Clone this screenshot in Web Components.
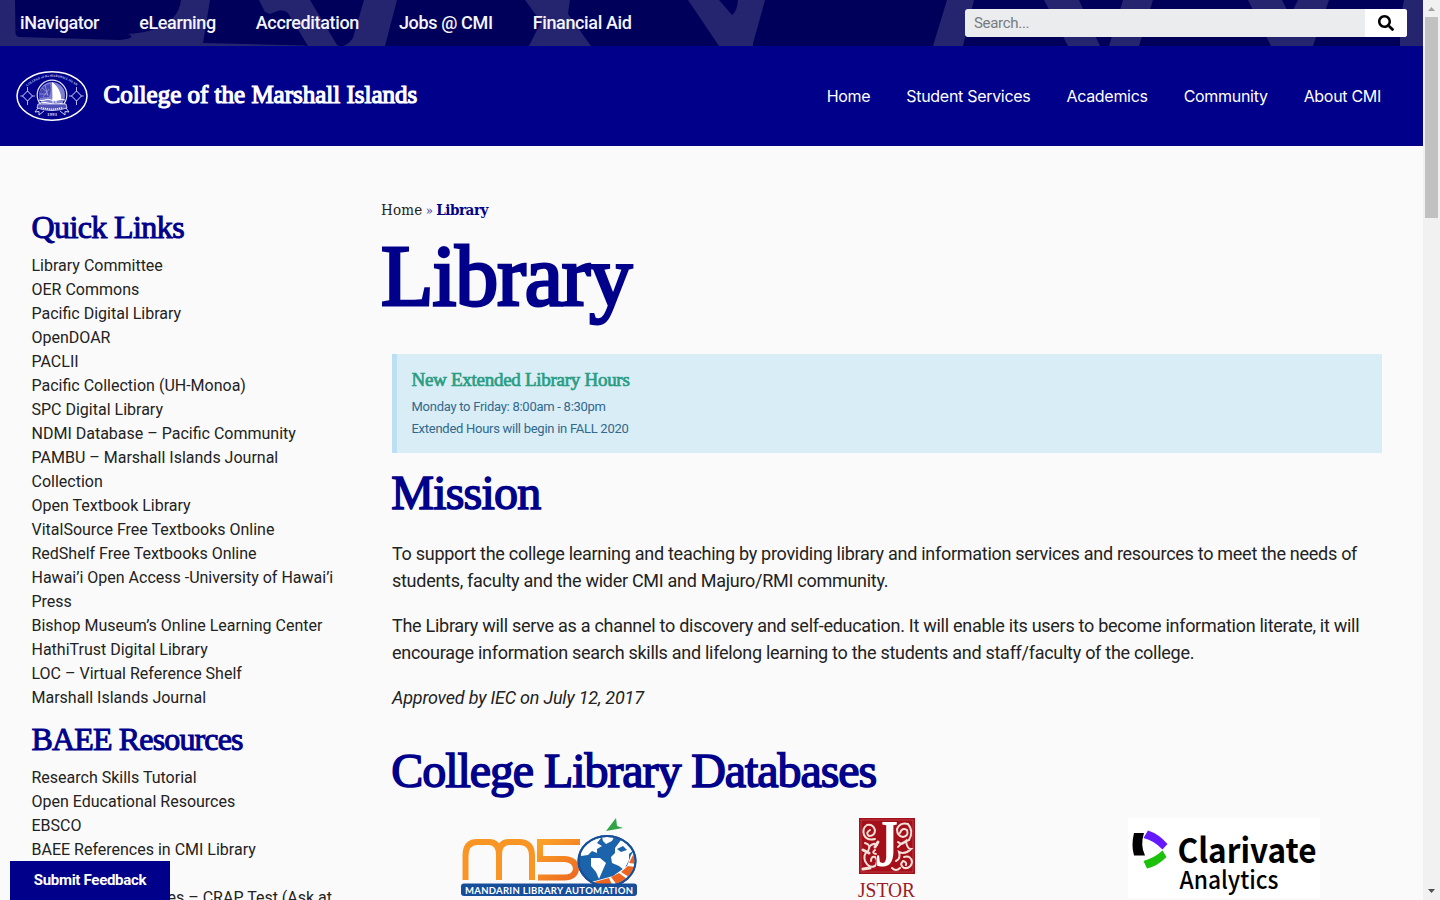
<!DOCTYPE html>
<html lang="en">
<head>
<meta charset="utf-8">
<title>Library – College of the Marshall Islands</title>
<style>
html,body{margin:0;height:100%;overflow:hidden;background:#fafafa}
body{font-family:Roboto,"Liberation Sans",sans-serif;color:#222}
</style>
</head>
<body>
<cmi-page></cmi-page>
<script>
const define = (name, html) => {
  const t = document.createElement('template');
  t.innerHTML = html;
  customElements.define(name, class extends HTMLElement {
    constructor() {
      super();
      this.attachShadow({mode: 'open'}).append(t.content.cloneNode(true));
    }
  });
};

define('cmi-topbar', `
<style>
:host{display:grid;height:46px;background:#00005b;overflow:hidden}
.art{display:block;width:1423px;height:46px}
.art,.row{grid-area:1/1}
.row{display:flex;align-items:center;justify-content:space-between;padding:0 16px 0 20px}
nav{display:flex;gap:40px;font-size:18px;font-weight:500;letter-spacing:-.36px;color:#f4f4fc;line-height:46px;white-space:nowrap}
.search{display:flex;width:442px;height:28px;border-radius:3px;overflow:hidden;background:#ebecee}
.search span{flex:1;padding-left:9px;font-size:15px;line-height:28px;letter-spacing:-.3px;color:#777b80}
.search b{width:42px;background:#fff;display:flex;align-items:center;justify-content:center}
</style>
<svg class="art" viewBox="0 0 1423 46"><g fill="#24246f">
<path d="M0 0H15L15.500 33Q16 37 20 37L120 40Q138 38 128 34Q160 32 173 18Q180 10 181 0H210L203 43L305 45.500V46H0Z"/>
<path d="M259 0L265 12L270 14L275 12Q283 8 288 13L308 46H385L397 0H364L353 38Q345 49 337 45L310 0Z"/>
<path d="M525 0L541 22L529 46H591L568 14L570 0Z"/>
<path d="M688 0L719 46H753Q753 42 754 40L765 0H738Q737 12 732 15L719 0Z"/>
<path d="M947 0H974L963 46H933Z"/><path d="M1044 0H1079L1100 46H1068Z"/><path d="M1123 0H1153L1139 46H1109Z"/>
<path d="M1248 0L1271 46H1313L1329 0H1298L1293 10H1287L1282 0Z"/><path d="M1404 0H1423V46H1400V20Z"/></g></svg>
<div class="row"><nav><slot></slot></nav>
<div class="search"><span>Search...</span><b><svg width="16" height="16" viewBox="0 0 512 512"><path d="M505 442.700L405.300 343c-4.500-4.500-10.600-7-17-7H372c27.600-35.300 44-79.700 44-128C416 93.100 322.900 0 208 0S0 93.100 0 208s93.100 208 208 208c48.300 0 92.700-16.400 128-44v16.300c0 6.400 2.500 12.500 7 17l99.700 99.700c9.400 9.400 24.600 9.400 33.900 0l28.300-28.300c9.400-9.400 9.400-24.600.1-34zM208 336c-70.700 0-128-57.200-128-128 0-70.700 57.200-128 128-128 70.700 0 128 57.200 128 128 0 70.700-57.200 128-128 128z"/></svg></b></div></div>`);

define('cmi-seal', `
<style>:host{display:block;width:72px;height:52px}svg{display:block;overflow:visible}text{font-family:"Liberation Serif",serif;fill:#d8d8f8}</style>
<svg width="72" height="52" viewBox="0 0 72 52" fill="none" stroke="#e4e4fa">
<ellipse cx="36" cy="26" rx="35" ry="24.300" stroke="#fff" stroke-width="1.500"/>
<path id="arc" d="M11 16.500Q36-3 61.500 16.500" stroke="none"/>
<text font-size="3.200" font-weight="bold" stroke="none"><textPath href="#arc">COLLEGE of the MARSHALL ISLANDS</textPath></text>
<circle cx="36" cy="25" r="14.800" stroke-width="1.200"/>
<circle cx="36" cy="25" r="13" fill="#8080d0" stroke="none"/>
<path d="M36 12C42 16 46 24 45 30C42 31 39 30 36.500 30Z" fill="#fff" stroke="none"/>
<path d="M34 14C26 15 23 21 23 28L33 27C35 22 35 18 34 14Z" fill="#4646b3" stroke="none"/>
<path d="M26 18l5 4M29 15l3 11M24 24l8 0M27 27l6-8" stroke="#b5b5e8" stroke-width=".6"/>
<path d="M23 30q3 1.500 6 0t6 0t6 0t8 0M24 33q5-1.500 10 .5t13-.5" stroke="#fff" stroke-width="1"/>
<path d="M37 28v6M40 28v5" stroke="#fff" stroke-width=".9"/>
<path d="M22 34L50 34L51 38Q36 43 21 38Z" fill="#5050b8" stroke-width=".8"/>
<path d="M25 37.500q11 3.200 22 0" stroke="#fff" stroke-width="1.300" stroke-dasharray="1.200 .8"/>
<path d="M22 38l-3 4 4-.5v3.500l5-4M50 38l3 4-4-.5v3.500l-5-4" stroke-width=".9"/>
<text x="31" y="46" font-size="5" font-weight="bold" stroke="none" textLength="10">1993</text>
<g stroke-width="1"><path d="M11.500 21L16.500 26L11.500 31L6.500 26Z"/><path d="M60.500 21L65.500 26L60.500 31L55.500 26Z"/></g>
<path d="M11.500 17v4M11.500 31v4M4.500 26h2M16.500 26h2.500M60.500 17v4M60.500 31v4M53 26h2.500M65.500 26h2" stroke-width=".8"/>
</svg>`);

define('cmi-header', `
<style>
:host{display:flex;align-items:center;justify-content:space-between;box-sizing:border-box;height:100px;background:#00008b;padding:0 42px 0 16px;color:#fff}
.brand{display:flex;align-items:center;gap:15.500px}
strong{font:400 25px/30px "Liberation Serif",serif;-webkit-text-stroke:1.200px #fff;white-space:nowrap;padding-bottom:3px}
nav{display:flex;gap:36px;font:400 16px/24px Inter,sans-serif;letter-spacing:-.3px;white-space:nowrap;padding-bottom:1px}
</style>
<div class="brand"><cmi-seal></cmi-seal><strong>College of the Marshall Islands</strong></div>
<nav><slot></slot></nav>`);

const listTemplate = document.createElement('template');
listTemplate.innerHTML = `
<style>
:host{display:block}
h2{margin:0 0 11px;font:400 32px/32px "Liberation Serif",serif;color:#00008b;-webkit-text-stroke:1px #00008b;letter-spacing:var(--track,-.6px);white-space:nowrap}
ul{list-style:none;margin:0;padding:0;font-size:16px;line-height:24px}
li{min-height:24px}
</style>
<h2></h2><ul></ul>`;
customElements.define('quick-links', class extends HTMLElement {
  connectedCallback() {
    if (this.shadowRoot) return;
    const root = this.attachShadow({mode: 'open'});
    root.append(listTemplate.content.cloneNode(true));
    root.querySelector('h2').textContent = this.getAttribute('heading');
    const ul = root.querySelector('ul');
    for (const a of [...this.querySelectorAll('a')]) {
      const li = document.createElement('li');
      li.textContent = a.textContent;
      if (a.dataset.indent) li.style.paddingLeft = a.dataset.indent;
      ul.append(li);
    }
  }
});

define('notice-box', `
<style>
:host{display:block;box-sizing:border-box;height:99px;background:#d9edf7;border-left:5px solid #bcdff1;padding:14px 14.500px;color:#31688c;font-size:13px;line-height:22px;letter-spacing:-.27px}
h3{margin:0 0 4px;font:400 19px/24px "Liberation Serif",serif;color:#2a9d83;-webkit-text-stroke:.7px #2a9d83;letter-spacing:-.28px}
</style><h3><slot name="title"></slot></h3><slot></slot>`);

define('logo-m5', `
<style>:host{display:block;width:178px;height:80px}svg{display:block}</style>
<svg width="178" height="80" viewBox="0 0 178 80">
<defs><linearGradient id="o" x1="0" y1="0" x2="1" y2="1"><stop offset="0" stop-color="#fba428"/><stop offset="1" stop-color="#ed6820"/></linearGradient>
<clipPath id="c"><ellipse cx="146" cy="43" rx="27.500" ry="24"/></clipPath></defs>
<path d="M4.500 62V38Q4.500 24 16 24H28Q38 24 38 37V62M38 37Q38 24 48 24H58Q71 24 71 38V62" fill="none" stroke="#f89524" stroke-width="6"/>
<path d="M119 24H79V41H104Q115 42 115 51Q114 59.500 103 59.500H77" fill="none" stroke="url(#o)" stroke-width="6"/>
<ellipse cx="146" cy="43" rx="29.500" ry="26" fill="#15509b"/>
<g clip-path="url(#c)"><rect x="115" y="12" width="62" height="62" fill="#1b63aa"/>
<path d="M119 33L124 25L132 20L140 20L136 25L141 28L136 31L136 35L131 33L127 37L120 38Z" fill="#fff"/>
<path d="M141 19L153 19L151 23L145 26L142 23Z" fill="#fff"/>
<path d="M130 40L139 40L145 45L141 54L138 61L135 54L130 48Z" fill="#fff"/>
<path d="M154 30L160 22L170 23L173 32L168 36L168 42L163 52L158 48L151 45L150 39L154 35Z" fill="#fff"/>
<path d="M156 31L162 28L166 32L160 34Z" fill="#1b63aa"/>
<path d="M176 28L170 37L166 48L152 58L134 63L120 65L145 76H181Z" fill="#fff"/>
<path d="M175 33V46L168 45L172 37ZM167 48L174 49L168 59L160 54ZM158 55L166 61L156 67L150 59ZM148 60L152 69H134L133 64Z" fill="#ee641f"/></g>
<ellipse cx="146" cy="43" rx="28.500" ry="25" fill="none" stroke="#174f98" stroke-width="2"/>
<path d="M145 13L155 0L156 8L162 10Z" fill="#32a447"/>
<rect y="65.500" width="176" height="12.500" rx="3" fill="#164e9c"/>
<text x="4" y="75.500" textLength="168" font-family="Lato,sans-serif" font-weight="700" font-size="9.500" fill="#fff">MANDARIN LIBRARY AUTOMATION</text>
</svg>`);

define('logo-jstor', `
<style>:host{display:block;width:58px;height:84px}svg{display:block;overflow:visible}</style>
<svg width="58" height="84" viewBox="0 0 58 84">
<rect x="1" y="0" width="56" height="56" fill="#a50f1a"/>
<rect x="3" y="2" width="52" height="52" fill="none" stroke="#c75a60" stroke-width=".6"/>
<g fill="none" stroke="#f3e1da" stroke-width="2" stroke-linecap="round">
<path d="M12 12Q7 15 11 18Q17 18 17 12Q15 6 9 7Q4 10 6 17Q9 23 17 21"/>
<path d="M7 25Q14 27 10 33Q5 36 7 43Q11 51 17 48Q21 43 17 39Q13 38 13 43M11 29Q15 24 19 27M17 32Q13 35 18 36"/>
<path d="M42 15Q44 9 49 12Q51 18 45 19Q39 18 39 11Q42 4 50 6Q56 13 51 22Q44 24 40 29"/>
<path d="M40 24Q44 28 48 23Q49 31 53 31Q47 37 41 34Q43 41 38 43M46 39Q53 37 54 44Q53 51 46 50Q41 47 45 43Q49 44 48 47M34 50Q38 54 42 50"/>
<path d="M5 32L11 35M20 24L17 29M5 51L12 50" stroke-width="3"/>
</g>
<text x="17" y="48" font-family="Liberation Serif,serif" font-weight="bold" font-size="68" textLength="23" lengthAdjust="spacingAndGlyphs" fill="#fff" stroke="#a50f1a" stroke-width="1.500" paint-order="stroke">J</text>
<text x="0" y="79" font-family="Liberation Serif,serif" font-size="21" textLength="57" lengthAdjust="spacingAndGlyphs" fill="#9c1c25">JSTOR</text>
</svg>`);

define('logo-clarivate', `
<style>:host{display:block;width:192px;height:80px;background:#fff}svg{display:block}text{font-family:"Noto Sans CJK JP",sans-serif}</style>
<svg width="192" height="80" viewBox="0 0 192 80">
<path d="M6 15H16Q12 27 17 37.500H6Q3 27 6 15Z" fill="#000"/>
<path d="M20 12.500Q31 16 39.500 26L34.500 31.500Q26 22.500 15.500 20Z" fill="#6419ff"/>
<path d="M15.500 43Q27 39.500 34.500 32.500L38.500 39Q29 48.500 19 50.500Z" fill="#1bc10a"/>
<text x="49.500" y="45" font-size="34" font-weight="700" textLength="139" lengthAdjust="spacingAndGlyphs">Clarivate</text>
<text x="51.500" y="70.500" font-size="24.500" font-weight="500" textLength="99" lengthAdjust="spacingAndGlyphs">Analytics</text>
</svg>`);

define('cmi-article', `
<style>
:host{display:block;width:1001px}
.crumb{font:15px/20px "DejaVu Serif Condensed","DejaVu Serif",serif;margin-top:54px;height:20px;letter-spacing:.2px;white-space:nowrap}
.crumb i{font-style:normal;color:#33339a;font-size:13px;margin:0 -1.300px}.crumb b{color:#00008b;letter-spacing:-.45px}
h1,h2{margin:0;font-family:"Liberation Serif",serif;font-weight:400;color:#00008b;white-space:nowrap}
h1{font-size:86px;line-height:88px;letter-spacing:-1.100px;margin-top:12px;-webkit-text-stroke:3px #00008b}
.body{padding-left:11px;margin-top:34px}
h2{font-size:48px;line-height:48px;letter-spacing:-.8px;margin-left:-.7px;-webkit-text-stroke:1.500px #00008b}
.mission{margin-top:16px}.db{margin-top:36px;letter-spacing:-1.080px}
p{margin:0 0 18px;font-size:18px;line-height:27px;letter-spacing:-.28px;white-space:nowrap}
h2+p{margin-top:23px}
p.em{font-style:italic;margin:0;letter-spacing:-.2px}
.logos{display:grid;grid-template-columns:repeat(3,1fr);justify-items:center;margin:23px -10px 0 -11px}
</style>
<div class="crumb">Home <i>»</i> <b>Library</b></div>
<h1>Library</h1>
<div class="body">
<notice-box><span slot="title">New Extended Library Hours</span>Monday to Friday: 8:00am - 8:30pm<br>Extended Hours will begin in FALL 2020</notice-box>
<h2 class="mission">Mission</h2>
<p>To support the college learning and teaching by providing library and information services and resources to meet the needs of<br>students, faculty and the wider CMI and Majuro/RMI community.</p>
<p>The Library will serve as a channel to discovery and self-education. It will enable its users to become information literate, it will<br>encourage information search skills and lifelong learning to the students and staff/faculty of the college.</p>
<p class="em">Approved by IEC on July 12, 2017</p>
<h2 class="db">College Library Databases</h2>
<div class="logos"><logo-m5></logo-m5><logo-jstor></logo-jstor><logo-clarivate></logo-clarivate></div>
</div>`);

define('page-scrollbar', `
<style>
:host{display:flex;flex-direction:column;align-items:center;width:17px;height:900px;background:#f1f1f1}
.thumb{width:13px;height:201px;background:#c1c1c1}
svg{display:block;width:17px;height:17px}.gap{flex:1}
</style>
<svg viewBox="0 0 17 17"><path d="M5 11L8.500 7L12 11Z" fill="#a3a3a3"/></svg><div class="thumb"></div><div class="gap"></div>
<svg viewBox="0 0 17 17"><path d="M5 6L8.500 10L12 6Z" fill="#505050"/></svg>`);

define('feedback-button', `
<style>:host{display:block;position:fixed;left:10px;top:861px;width:160px;height:39px;background:#00008b;color:#fff;font-size:15px;font-weight:700;letter-spacing:-.3px;line-height:38px;text-align:center}</style><slot></slot>`);

define('cmi-page', `
<style>
:host{display:flex;width:1440px;height:900px;overflow:hidden}
main{width:1423px;height:900px;overflow:hidden}
.cols{display:flex}
aside{width:318px;padding:65px 0 0 31.500px;margin-right:31.500px}
.second{margin-top:13px;--track:-.85px}
</style>
<main>
<cmi-topbar><span>iNavigator</span><span>eLearning</span><span>Accreditation</span><span>Jobs @ CMI</span><span>Financial Aid</span></cmi-topbar>
<cmi-header><span>Home</span><span>Student Services</span><span>Academics</span><span>Community</span><span>About CMI</span></cmi-header>
<div class="cols"><aside>
<quick-links heading="Quick Links"><a>Library Committee</a><a>OER Commons</a><a>Pacific Digital Library</a><a>OpenDOAR</a><a>PACLII</a><a>Pacific Collection (UH-Monoa)</a><a>SPC Digital Library</a><a>NDMI Database – Pacific Community</a><a>PAMBU – Marshall Islands Journal Collection</a><a>Open Textbook Library</a><a>VitalSource Free Textbooks Online</a><a>RedShelf Free Textbooks Online</a><a>Hawai’i Open Access -University of Hawai’i Press</a><a>Bishop Museum’s Online Learning Center</a><a>HathiTrust Digital Library</a><a>LOC – Virtual Reference Shelf</a><a>Marshall Islands Journal</a></quick-links>
<quick-links class="second" heading="BAEE Resources"><a>Research Skills Tutorial</a><a>Open Educational Resources</a><a>EBSCO</a><a>BAEE References in CMI Library</a><a></a><a data-indent="136px">es – CRAP Test (Ask at</a></quick-links>
</aside><cmi-article></cmi-article></div>
</main>
<page-scrollbar></page-scrollbar>
<feedback-button>Submit Feedback</feedback-button>`);
</script>
</body>
</html>
